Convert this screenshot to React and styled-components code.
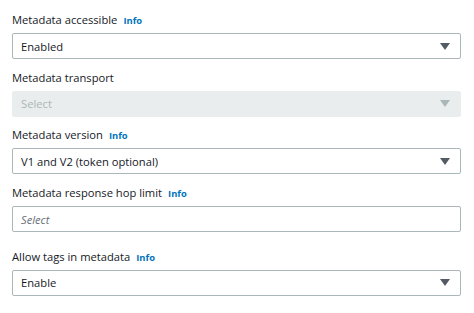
import React from "react";
import styled, { createGlobalStyle } from "styled-components";

const GlobalStyle = createGlobalStyle`
  body {
    margin: 0;
    background: #ffffff;
    font-family: "Open Sans", "Noto Sans", Arial, sans-serif;
    color: #16191f;
  }
`;

const Form = styled.div`
  display: flex;
  flex-direction: column;
  gap: 8.7px;
  padding: 10px 13px 0 12px;
`;

const Field = styled.div`
  display: flex;
  flex-direction: column;
  gap: 5px;
  margin-top: ${(p) => (p.spaced ? "6px" : "0")};
`;

const Label = styled.div`
  display: flex;
  align-items: baseline;
  gap: 6px;
  height: 18px;
  font-size: 11.2px;
  line-height: 20px;
  color: #16191f;
`;

const Info = styled.span`
  font-size: 9.4px;
  font-weight: 700;
  color: #0073bb;
`;

const Select = styled.div`
  box-sizing: border-box;
  height: 26px;
  display: flex;
  align-items: center;
  justify-content: space-between;
  padding: 0 10px 0 8px;
  border: 1px solid ${(p) => (p.disabled ? "#eaeded" : "#aab7b8")};
  border-radius: 2px;
  background: ${(p) => (p.disabled ? "#eaeded" : "#ffffff")};
  font-size: 11.2px;
  color: ${(p) => (p.disabled ? "#aab7b8" : "#16191f")};
`;

const Placeholder = styled.span`
  font-style: italic;
  color: #687078;
`;

const Arrow = styled.span`
  width: 0;
  height: 0;
  border-left: 5px solid transparent;
  border-right: 5px solid transparent;
  border-top: 7px solid ${(p) => (p.disabled ? "#aab7b8" : "#545b64")};
`;

const fields = [
  { label: "Metadata accessible", info: true, value: "Enabled", arrow: true },
  { label: "Metadata transport", value: "Select", disabled: true, arrow: true },
  { label: "Metadata version", info: true, value: "V1 and V2 (token optional)", arrow: true },
  { label: "Metadata response hop limit", info: true, placeholder: "Select" },
  { label: "Allow tags in metadata", info: true, value: "Enable", arrow: true, spaced: true },
];

export default function App() {
  return (
    <>
      <GlobalStyle />
      <Form>
        {fields.map((f) => (
          <Field key={f.label} spaced={f.spaced}>
            <Label>
              {f.label}
              {f.info && <Info>Info</Info>}
            </Label>
            <Select disabled={f.disabled}>
              {f.placeholder ? <Placeholder>{f.placeholder}</Placeholder> : <span>{f.value}</span>}
              {f.arrow && <Arrow disabled={f.disabled} />}
            </Select>
          </Field>
        ))}
      </Form>
    </>
  );
}
